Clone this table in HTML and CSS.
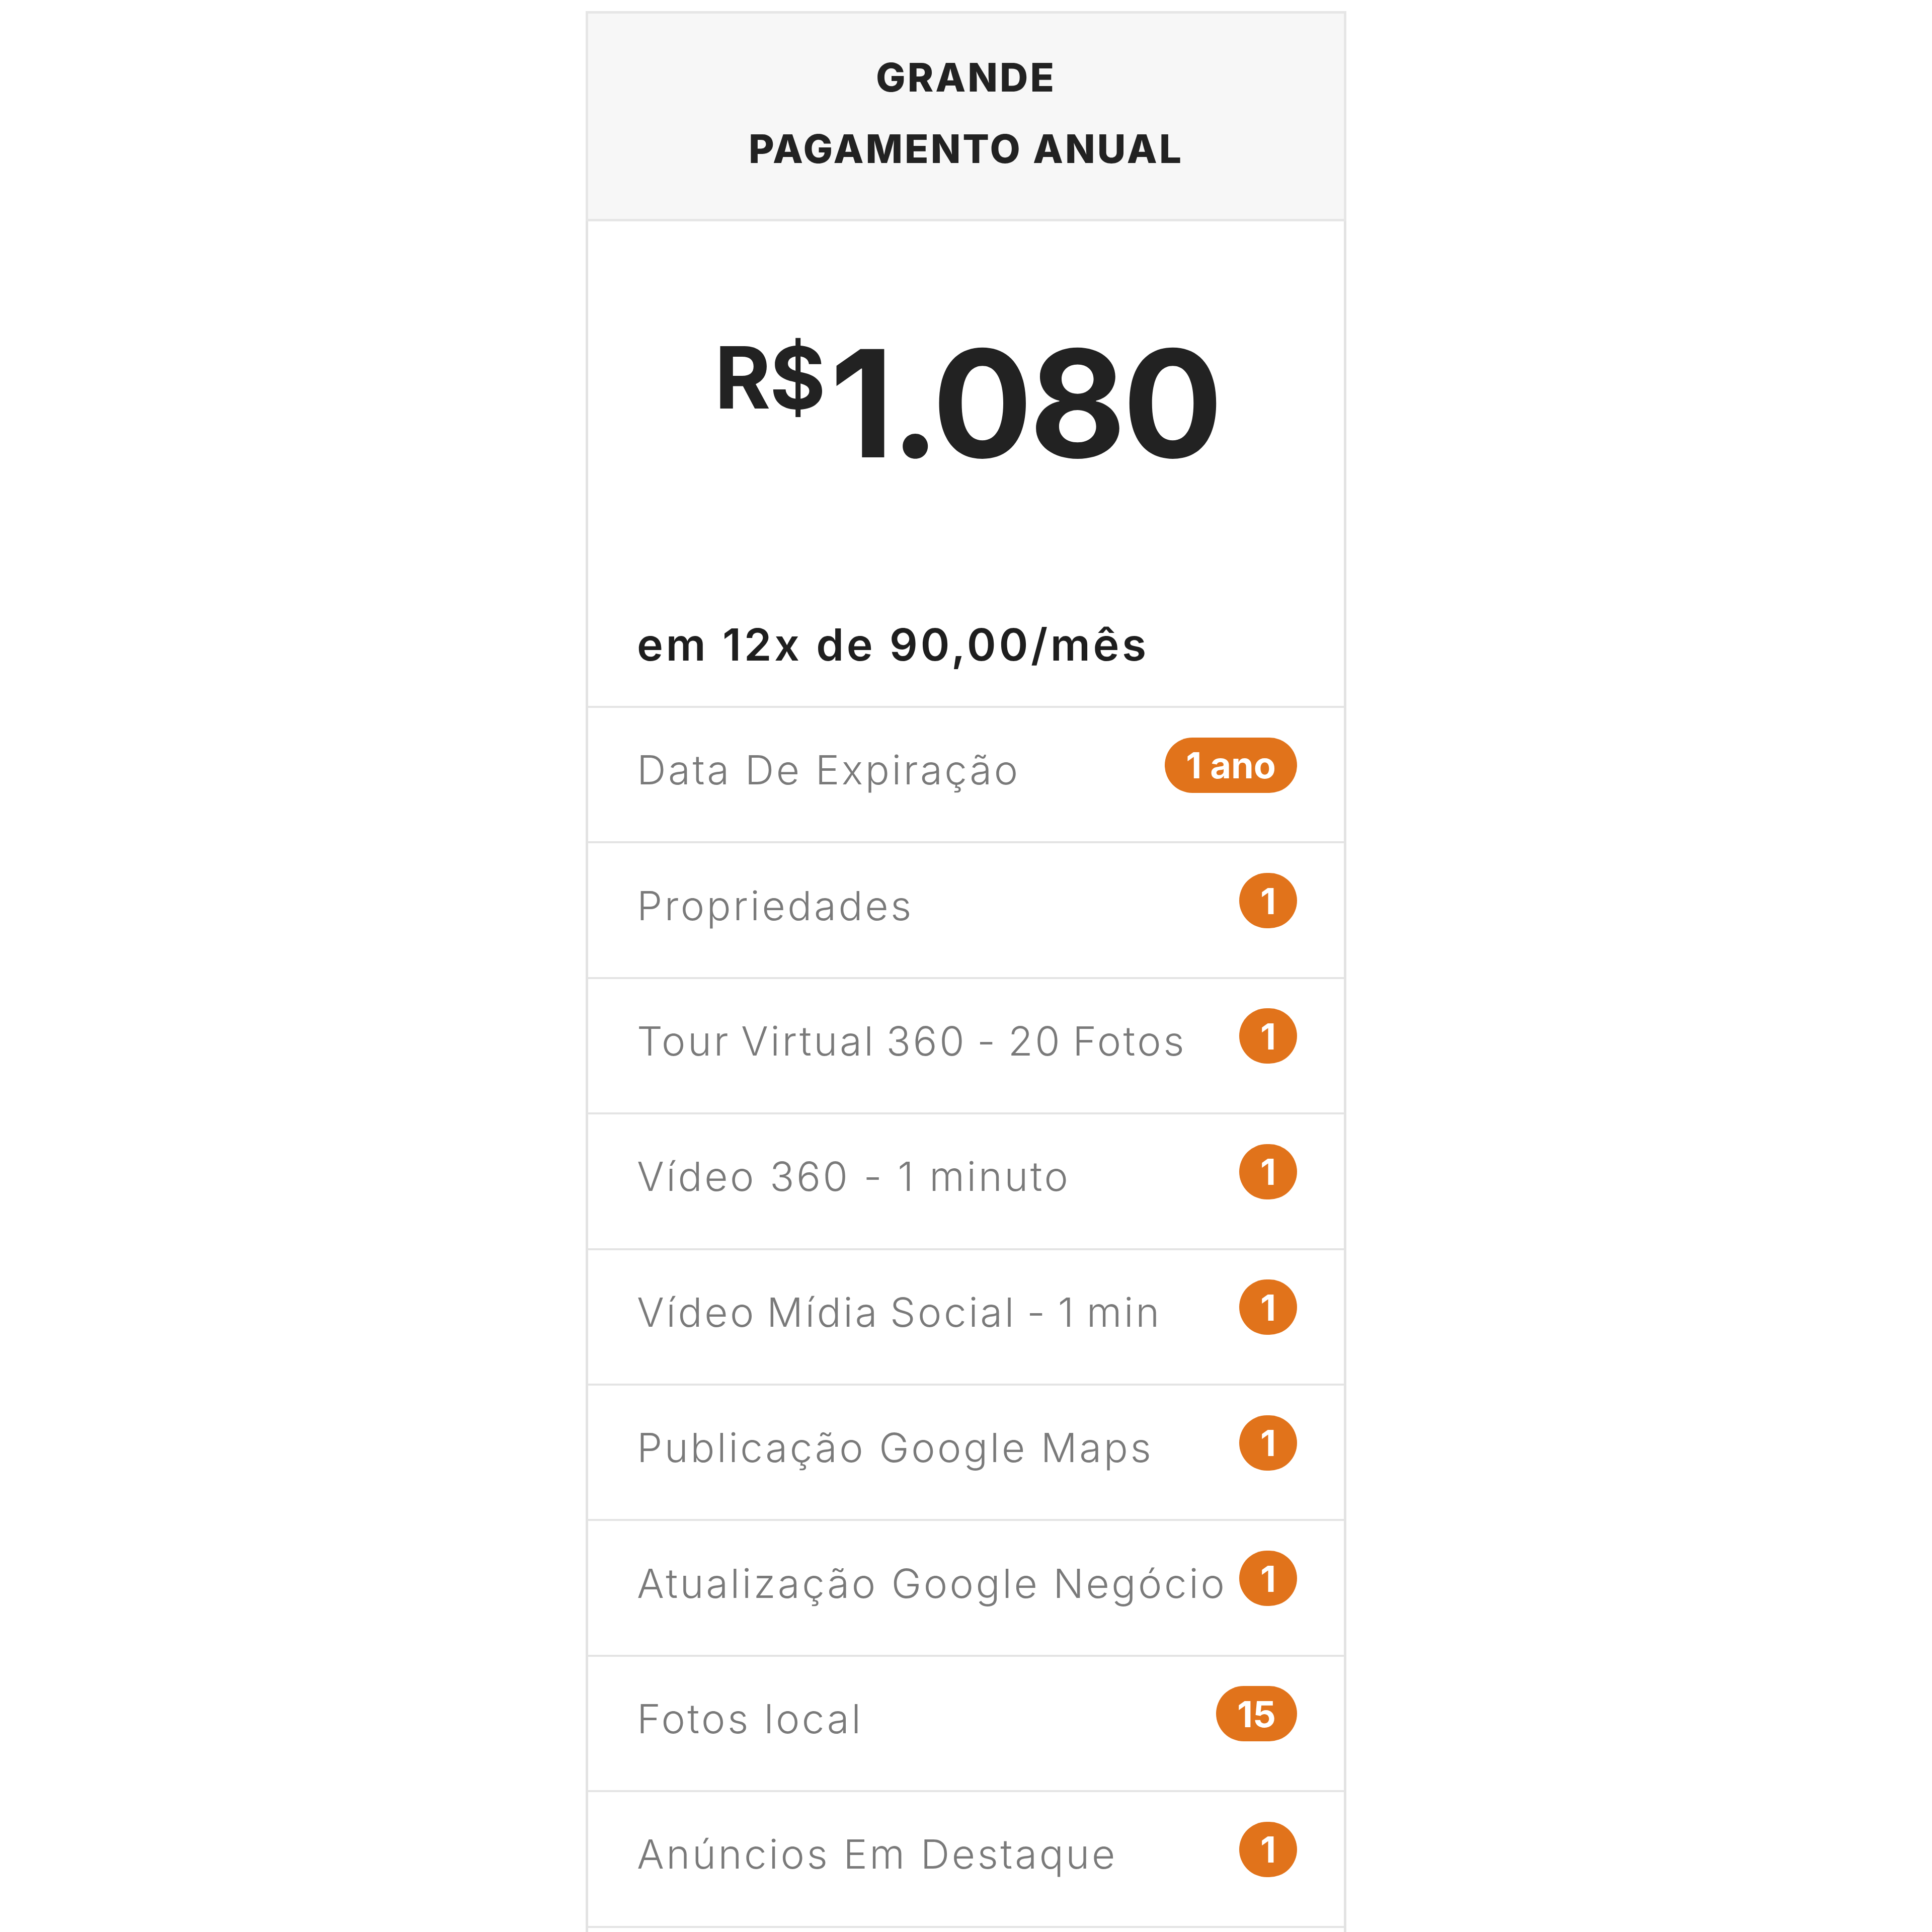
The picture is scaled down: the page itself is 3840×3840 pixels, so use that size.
FILE: index.html
```html
<!DOCTYPE html>
<html lang="pt-BR">
<head>
<meta charset="utf-8">
<title>Grande - Pagamento Anual</title>
<link rel="stylesheet" href="styles.css">
</head>
<body>
<div class="card">
  <div class="card-head">
    <div class="head-line">GRANDE</div>
    <div class="head-line">PAGAMENTO ANUAL</div>
  </div>
  <div class="card-body">
    <div class="price-sec">
      <div class="price">
        <span class="cur">R$</span><span class="amt">1.080</span>
      </div>
      <div class="installment">em 12x de 90,00/mês</div>
    </div>
    <ul class="features">
      <li class="feat"><span class="feat-name">Data De Expiração</span><span class="badge">1 ano</span></li>
      <li class="feat"><span class="feat-name">Propriedades</span><span class="badge">1</span></li>
      <li class="feat"><span class="feat-name tight">Tour Virtual 360 - 20 Fotos</span><span class="badge">1</span></li>
      <li class="feat"><span class="feat-name">Vídeo 360 - 1 minuto</span><span class="badge">1</span></li>
      <li class="feat"><span class="feat-name tight">Vídeo Mídia Social - 1 min</span><span class="badge">1</span></li>
      <li class="feat"><span class="feat-name">Publicação Google Maps</span><span class="badge">1</span></li>
      <li class="feat"><span class="feat-name">Atualização Google Negócio</span><span class="badge">1</span></li>
      <li class="feat"><span class="feat-name">Fotos local</span><span class="badge">15</span></li>
      <li class="feat"><span class="feat-name">Anúncios Em Destaque</span><span class="badge">1</span></li>
      <li class="feat"><span class="feat-name">&nbsp;</span></li>
    </ul>
  </div>
</div>
</body>
</html>
```

FILE: styles.css
```css
html, body {
  margin: 0;
  padding: 0;
  background: #ffffff;
}

body {
  font-family: Inter, "Open Sans", "DejaVu Sans", sans-serif;
  color: #222222;
}

.card {
  width: 1512px;
  margin: 22px auto 0;
}

.card-head {
  box-sizing: border-box;
  height: 418px;
  background: #f7f7f7;
  border: 5px solid #e6e6e6;
  padding-top: 56px;
  text-align: center;
}

.head-line {
  font-size: 78px;
  font-weight: 800;
  line-height: 142px;
  letter-spacing: 4px;
  color: #222222;
}

.card-body {
  border-left: 5px solid #e3e3e3;
  border-right: 5px solid #e3e3e3;
  background: #ffffff;
}

.price-sec {
  padding: 209px 93px 78px 97px;
}

.price {
  display: flex;
  justify-content: center;
  align-items: flex-start;
}

.cur {
  font-size: 170px;
  font-weight: 700;
  line-height: 1;
  margin-top: 16px;
  margin-right: 10px;
  letter-spacing: -2px;
}

.amt {
  font-size: 296px;
  font-weight: 700;
  line-height: 1;
  margin-top: 4px;
  letter-spacing: -7px;
}

.installment {
  margin-top: 288px;
  font-size: 88px;
  font-weight: 600;
  line-height: 88px;
  letter-spacing: 5.5px;
  color: #1e1e1e;
}

.features {
  list-style: none;
  margin: 0;
  padding: 0;
}

.feat {
  box-sizing: border-box;
  height: 269.4px;
  border-top: 4px solid #e4e4e4;
  display: flex;
  align-items: center;
  justify-content: space-between;
  padding: 0 93px 20px 97px;
}

.feat-name {
  font-size: 80px;
  font-weight: 300;
  letter-spacing: 4.5px;
  color: #7a7a7a;
  white-space: nowrap;
}

.feat-name.tight {
  word-spacing: -6px;
}

.badge {
  flex-shrink: 0;
  box-sizing: border-box;
  height: 110px;
  min-width: 113px;
  padding: 0 42px;
  border-radius: 56px;
  background: #e1731b;
  color: #ffffff;
  font-size: 72px;
  font-weight: 700;
  display: flex;
  align-items: center;
  justify-content: center;
  margin-bottom: 18px;
}
```
